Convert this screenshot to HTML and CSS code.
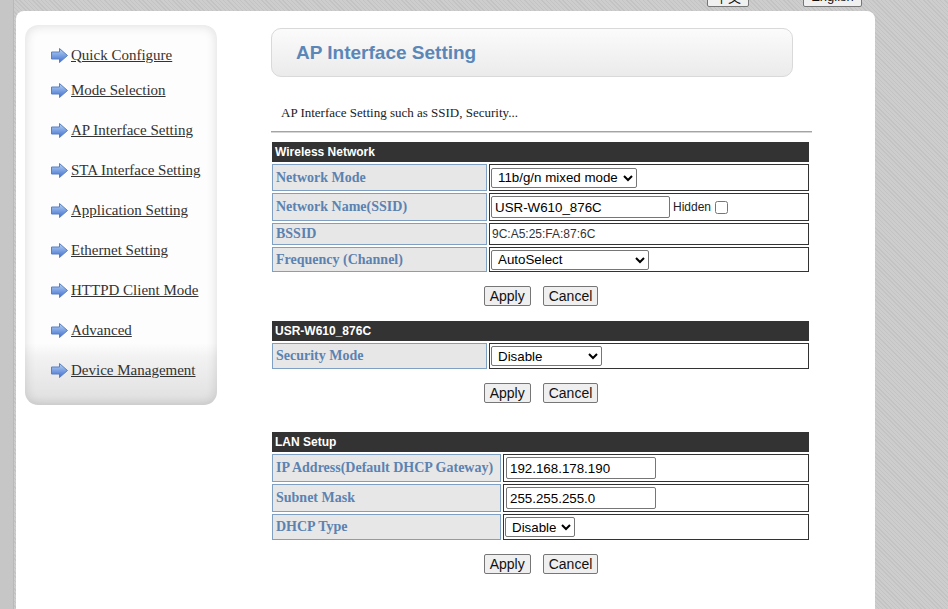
FILE: index.html
```html
<!DOCTYPE html>
<html>
<head>
<meta charset="utf-8">
<title>AP Interface Setting</title>
<link rel="stylesheet" href="styles.css">
</head>
<body>
<div class="topbar">
  <button class="lang">中文</button>
  <button class="lang">English</button>
</div>
<div class="panel">
  <div class="sidebar">
    <ul class="menu">
      <li class="first"><svg class="arrow" viewBox="0 0 17 15"><defs><linearGradient id="ag" x1="0" y1="0" x2="0" y2="1"><stop offset="0" stop-color="#b9d3f5"/><stop offset="1" stop-color="#3f6fce"/></linearGradient></defs><polygon points="0.5,4 8.5,4 8.5,0.5 16.5,7.5 8.5,14.5 8.5,11 0.5,11" fill="url(#ag)" stroke="#5a7fc0" stroke-width="1"/></svg><a href="#">Quick Configure</a></li>
      <li><svg class="arrow" viewBox="0 0 17 15"><polygon points="0.5,4 8.5,4 8.5,0.5 16.5,7.5 8.5,14.5 8.5,11 0.5,11" fill="url(#ag)" stroke="#5a7fc0" stroke-width="1"/></svg><a href="#">Mode Selection</a></li>
      <li><svg class="arrow" viewBox="0 0 17 15"><polygon points="0.5,4 8.5,4 8.5,0.5 16.5,7.5 8.5,14.5 8.5,11 0.5,11" fill="url(#ag)" stroke="#5a7fc0" stroke-width="1"/></svg><a href="#">AP Interface Setting</a></li>
      <li><svg class="arrow" viewBox="0 0 17 15"><polygon points="0.5,4 8.5,4 8.5,0.5 16.5,7.5 8.5,14.5 8.5,11 0.5,11" fill="url(#ag)" stroke="#5a7fc0" stroke-width="1"/></svg><a href="#">STA Interface Setting</a></li>
      <li><svg class="arrow" viewBox="0 0 17 15"><polygon points="0.5,4 8.5,4 8.5,0.5 16.5,7.5 8.5,14.5 8.5,11 0.5,11" fill="url(#ag)" stroke="#5a7fc0" stroke-width="1"/></svg><a href="#">Application Setting</a></li>
      <li><svg class="arrow" viewBox="0 0 17 15"><polygon points="0.5,4 8.5,4 8.5,0.5 16.5,7.5 8.5,14.5 8.5,11 0.5,11" fill="url(#ag)" stroke="#5a7fc0" stroke-width="1"/></svg><a href="#">Ethernet Setting</a></li>
      <li><svg class="arrow" viewBox="0 0 17 15"><polygon points="0.5,4 8.5,4 8.5,0.5 16.5,7.5 8.5,14.5 8.5,11 0.5,11" fill="url(#ag)" stroke="#5a7fc0" stroke-width="1"/></svg><a href="#">HTTPD Client Mode</a></li>
      <li><svg class="arrow" viewBox="0 0 17 15"><polygon points="0.5,4 8.5,4 8.5,0.5 16.5,7.5 8.5,14.5 8.5,11 0.5,11" fill="url(#ag)" stroke="#5a7fc0" stroke-width="1"/></svg><a href="#">Advanced</a></li>
      <li><svg class="arrow" viewBox="0 0 17 15"><polygon points="0.5,4 8.5,4 8.5,0.5 16.5,7.5 8.5,14.5 8.5,11 0.5,11" fill="url(#ag)" stroke="#5a7fc0" stroke-width="1"/></svg><a href="#">Device Management</a></li>
    </ul>
  </div>
  <div class="main">
    <div class="titlebox"><h1>AP Interface Setting</h1></div>
    <p class="desc">AP Interface Setting such as SSID, Security...</p>
    <hr class="sep">
    <table class="cfg">
      <colgroup><col class="c-label"><col></colgroup>
      <tr><th colspan="2">Wireless Network</th></tr>
      <tr class="h27"><td class="label">Network Mode</td><td class="val"><select class="sel-mode"><option>11b/g/n mixed mode</option></select></td></tr>
      <tr class="h28"><td class="label">Network Name(SSID)</td><td class="val"><input class="in-ssid" type="text" value="USR-W610_876C"><span class="hidden-lbl">Hidden</span><input class="chk" type="checkbox"></td></tr>
      <tr class="h22"><td class="label">BSSID</td><td class="val"><span class="plain">9C:A5:25:FA:87:6C</span></td></tr>
      <tr class="h25"><td class="label">Frequency (Channel)</td><td class="val"><select class="sel-freq"><option>AutoSelect</option></select></td></tr>
    </table>
    <div class="actions"><button class="btn">Apply</button><button class="btn">Cancel</button></div>
    <table class="cfg">
      <colgroup><col class="c-label"><col></colgroup>
      <tr><th colspan="2">USR-W610_876C</th></tr>
      <tr class="h26"><td class="label">Security Mode</td><td class="val"><select class="sel-sec"><option>Disable</option></select></td></tr>
    </table>
    <div class="actions actions-wide"><button class="btn">Apply</button><button class="btn">Cancel</button></div>
    <table class="cfg">
      <colgroup><col class="c-label-lan"><col></colgroup>
      <tr><th colspan="2">LAN Setup</th></tr>
      <tr class="h28"><td class="label">IP Address(Default DHCP Gateway)</td><td class="val"><input class="in-ip" type="text" value="192.168.178.190"></td></tr>
      <tr class="h28"><td class="label">Subnet Mask</td><td class="val"><input class="in-ip" type="text" value="255.255.255.0"></td></tr>
      <tr class="h26"><td class="label">DHCP Type</td><td class="val"><select class="sel-dhcp"><option>Disable</option></select></td></tr>
    </table>
    <div class="actions"><button class="btn">Apply</button><button class="btn">Cancel</button></div>
  </div>
</div>
</body>
</html>
```
FILE: styles.css
```css
* { box-sizing: border-box; }
html, body { height: 100%; }
body {
  margin: 0;
  overflow: hidden;
  font-family: "Liberation Sans", Arial, sans-serif;
  background:
    linear-gradient(to right, #c6c6c6 0, #c6c6c6 13px, #b9b9b9 13px, #b9b9b9 14px, transparent 14px),
    repeating-linear-gradient(45deg, #c3c3c3 0, #c3c3c3 1px, #cdcdcd 1px, #cdcdcd 3px);
}
.topbar {
  height: 11px;
  display: flex;
  gap: 54px;
  padding-left: 707px;
}
.lang {
  margin-top: -14px;
  height: 21px;
  padding: 0;
  white-space: nowrap;
  font: 13px "Liberation Sans", "Noto Sans CJK SC", sans-serif;
  background: #f0f0f0;
  border: 1px solid #767676;
  border-radius: 2px;
  color: #111;
}
.lang:first-child { width: 42px; }
.lang:last-child { width: 59px; }
.panel {
  margin-left: 16px;
  width: 859px;
  min-height: 598px;
  background: #fff;
  border-radius: 8px 8px 0 0;
  display: flex;
  align-items: flex-start;
  padding: 14px 0 0 9px;
  gap: 53px;
}
.sidebar {
  width: 192px;
  height: 380px;
  border-radius: 13px;
  background:
    linear-gradient(to bottom, rgba(255,255,255,0) 0, rgba(255,255,255,0) 318px, #f2f2f2 332px, #e2e2e2 372px, #dcdcdc 380px),
    #fdfdfd;
  box-shadow: inset 0 0 10px 2px rgba(0,0,0,0.10);
  padding: 15px 0 0 26px;
}
.menu { list-style: none; margin: 0; padding: 0; }
.menu li {
  height: 40px;
  display: flex;
  align-items: center;
}
.menu li.first { height: 30px; }
.arrow { width: 17px; height: 15px; margin-right: 3px; flex: none; }
.menu a {
  font: 15px "Liberation Serif", "Times New Roman", serif;
  color: #333;
  text-decoration: underline;
}
.main {
  width: 542px;
  margin-top: 3px;
  display: flex;
  flex-direction: column;
}
.titlebox {
  margin-left: 1px;
  width: 522px;
  height: 49px;
  border: 1px solid #d9d9d9;
  border-radius: 10px;
  background: linear-gradient(to bottom, #fbfbfb, #ebebeb);
  display: flex;
  align-items: center;
  padding-left: 24px;
}
.titlebox h1 {
  margin: 0;
  font: bold 19px "Liberation Sans", Arial, sans-serif;
  color: #5a86b8;
}
.desc {
  margin: 29px 0 0 11px;
  font: 13px/14px "Liberation Serif", "Times New Roman", serif;
  color: #222;
}
.sep {
  margin: 11px 0 0 1px;
  width: 541px;
  border: 0;
  border-top: 1px solid #a4a4a4;
  border-bottom: 1px solid #d6d6d6;
  height: 2px;
}
.cfg {
  margin-top: 7px;
  width: 541px;
  border-collapse: separate;
  border-spacing: 2px;
  table-layout: fixed;
}
.c-label { width: 215px; }
.c-label-lan { width: 229px; }
.cfg th {
  height: 20px;
  padding: 0 0 0 3px;
  background: #333;
  color: #fff;
  font: bold 12px "Liberation Sans", Arial, sans-serif;
  text-align: left;
}
.cfg td { padding: 0; vertical-align: middle; }
.cfg td.label {
  background: #e7e7e7;
  border: 1px solid #7f9fc3;
  padding-left: 3px;
  white-space: nowrap;
  font: bold 14px "Liberation Serif", "Times New Roman", serif;
  color: #5b82b1;
}
.cfg td.val {
  border: 1px solid #333;
  padding-left: 1px;
  font-size: 12px;
  white-space: nowrap;
}
.h22 td { height: 22px; }
.h25 td { height: 25px; }
.h26 td { height: 26px; }
.h27 td { height: 27px; }
.h28 td { height: 28px; }
select, input[type=text] {
  font: 13.333px "Liberation Sans", Arial, sans-serif;
  color: #000;
  vertical-align: middle;
}
select {
  height: 20px;
  border: 1px solid #767676;
  border-radius: 2px;
  background: #fff;
  padding: 0 0 0 2px;
}
.sel-mode { width: 146px; }
.sel-freq { width: 158px; }
.sel-sec { width: 111px; }
.sel-dhcp { width: 70px; }
input[type=text] {
  border: 1px solid #767676;
  border-radius: 2px;
  padding: 1px 3px;
  height: 22px;
}
.in-ssid { width: 179px; }
.in-ip { width: 150px; height: 21px; margin-left: 1px; }
.hidden-lbl {
  font: 12px "Liberation Sans", Arial, sans-serif;
  color: #222;
  margin-left: 3px;
  vertical-align: middle;
}
.chk { margin: 0 0 0 4px; width: 13px; height: 13px; vertical-align: middle; }
.plain {
  margin-left: 1px;
  font: 12px "Liberation Sans", Arial, sans-serif;
  color: #333;
}
.actions {
  display: flex;
  justify-content: center;
  gap: 12px;
  margin: 12px 0 13px;
}
.actions + .cfg { margin-top: 0; }
.actions-wide { margin-bottom: 27px; }
.btn {
  height: 20px;
  padding: 0 5px;
  font: 14px "Liberation Sans", Arial, sans-serif;
  color: #111;
  background: #efefef;
  border: 1px solid #767676;
  border-radius: 2px;
}
```
